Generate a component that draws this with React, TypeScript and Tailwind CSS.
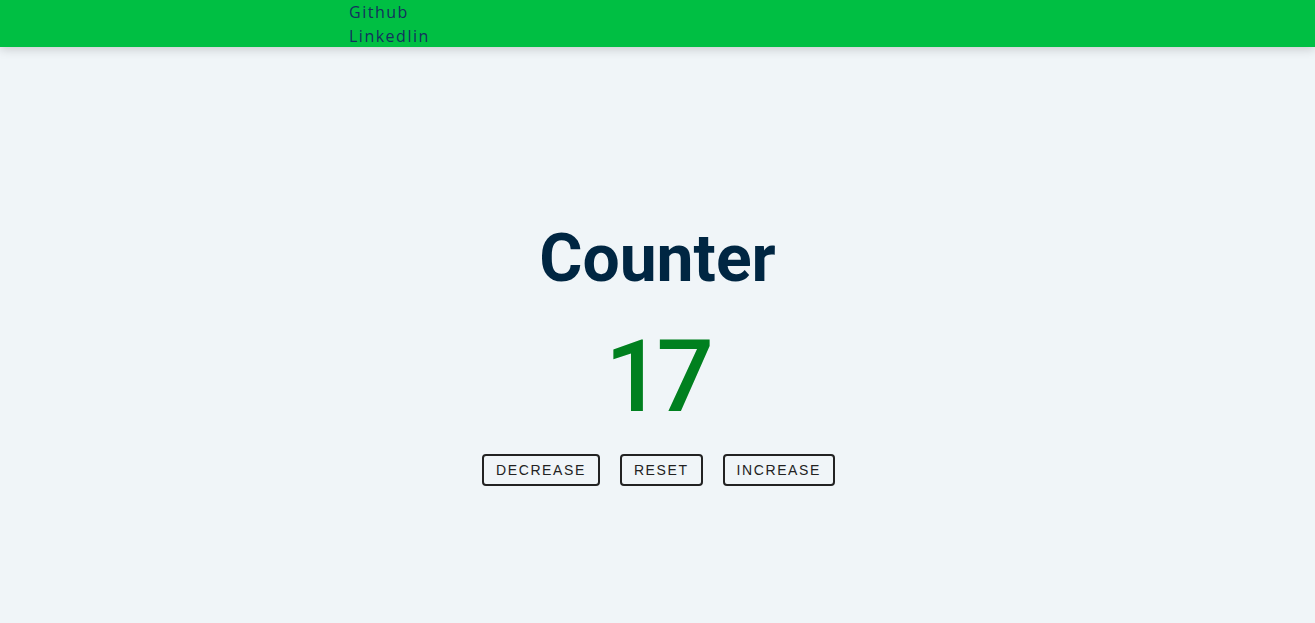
import { useState } from "react";

export default function App() {
  const [count, setCount] = useState(17);

  return (
    <div className="min-h-[623px] bg-[#f0f5f8]">
      <header className="h-[47px] bg-[#00bf43] shadow-[0_2px_10px_rgba(0,0,0,0.18)] relative">
        <nav className="ml-[349px] flex flex-col font-['Open_Sans',sans-serif] font-medium text-[16px] leading-[24px] tracking-[1.5px] text-[#14305e]">
          <a href="#">Github</a>
          <a href="#">Linkedlin</a>
        </nav>
      </header>

      <main className="flex flex-col items-center pt-[173px]">
        <h1 className="font-['Roboto',sans-serif] font-bold text-[66px] leading-[77px] text-[#002642]">
          Counter
        </h1>
        <span className="mt-[20px] pr-[2px] font-['Roboto',sans-serif] font-medium text-[101px] leading-[120px] tracking-[-6px] text-[#00801f]">
          {count}
        </span>
        <div className="mt-[17px] pl-[2px] flex gap-5 font-['Liberation_Sans',Arial,sans-serif] text-[14px] tracking-[1.6px] text-[#222]">
          <button
            onClick={() => setCount(count - 1)}
            className="h-[32px] px-3 border-2 border-[#222] rounded-[4px] bg-transparent"
          >
            DECREASE
          </button>
          <button
            onClick={() => setCount(0)}
            className="h-[32px] px-3 border-2 border-[#222] rounded-[4px] bg-transparent"
          >
            RESET
          </button>
          <button
            onClick={() => setCount(count + 1)}
            className="h-[32px] px-3 border-2 border-[#222] rounded-[4px] bg-transparent"
          >
            INCREASE
          </button>
        </div>
      </main>
    </div>
  );
}
